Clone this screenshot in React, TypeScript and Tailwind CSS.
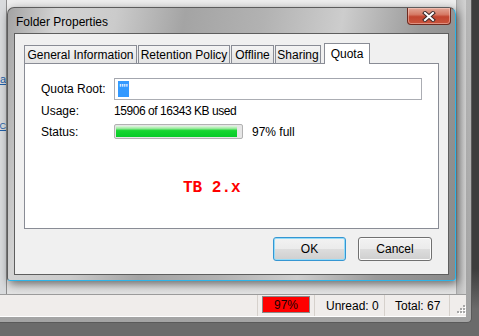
import React from 'react';

const tabs = [
  { label: 'General Information', w: 'w-[113px]' },
  { label: 'Retention Policy', w: 'w-[92px]' },
  { label: 'Offline', w: 'w-[43px]' },
  { label: 'Sharing', w: 'w-[46px]' },
];

function CloseButton() {
  return (
    <div className="-mr-[2px] w-[44px] h-[17px] rounded-b-[4px] border border-t-0 border-[#6e2a1f] bg-[linear-gradient(to_bottom,#e3a797_0%,#d67b66_40%,#c2452f_55%,#c9543d_100%)] shadow-[inset_0_0_0_1px_rgba(255,220,210,0.45)] flex items-center justify-center">
      <svg width="14" height="11" viewBox="0 0 14 11">
        <path d="M3 2 L11 9 M11 2 L3 9" stroke="#3b2a2a" strokeWidth="4" strokeLinecap="square" />
        <path d="M3 2 L11 9 M11 2 L3 9" stroke="#ffffff" strokeWidth="2" strokeLinecap="square" />
      </svg>
    </div>
  );
}

function Grip() {
  const dots = [
    [6, 0],
    [3, 3],
    [6, 3],
    [0, 6],
    [3, 6],
    [6, 6],
  ];
  return (
    <svg width="9" height="9" viewBox="0 0 9 9">
      {dots.map(([x, y], i) => (
        <g key={i}>
          <rect x={x + 1} y={y + 1} width="2" height="2" fill="#ffffff" />
          <rect x={x} y={y} width="2" height="2" fill="#a8a8a8" />
        </g>
      ))}
    </svg>
  );
}

function StatusBar() {
  return (
    <div className="h-[23px] flex border-t border-[#9c9c9c] border-b border-b-white bg-[#f0edeb] text-[12px]">
      <div className="flex-1 border-r border-[#d6d1cc]" />
      <div className="w-[57px] border-r border-[#d6d1cc] pl-[4px] pt-[1px]">
        <div className="w-[48px] h-[17px] border border-[#8a8a8a] bg-[#ff0000] flex items-center justify-center text-[#1a0000]">
          97%
        </div>
      </div>
      <div className="w-[70px] border-r border-[#d6d1cc] pl-[11px] flex items-center">Unread: 0</div>
      <div className="w-[65px] border-r border-[#d6d1cc] pl-[10px] flex items-center">Total: 67</div>
      <div className="flex-1 max-w-[16px] flex items-end justify-start pb-[2px] pl-[7px]">
        <Grip />
      </div>
    </div>
  );
}

function Dialog() {
  return (
    <div className="absolute left-[7px] top-[7px] w-[449px] h-[274px] flex flex-col rounded-t-[7px] rounded-b-[3px] border border-[#5c5c5c] border-r-[#2cb4e8] border-b-[#2cb4e8] bg-[linear-gradient(100deg,#a3a3a3_0%,#d3d3d3_10%,#cbcbcb_22%,#a4a4a4_36%,#b2b2b2_52%,#cdcdcd_68%,#9a9a9a_84%,#8a8a8a_100%)] shadow-[2px_3px_10px_rgba(0,0,0,0.55)] px-[6px] pb-[5px]">
      {/* title bar */}
      <div className="h-[25px] flex items-start pl-[2px]">
        <span className="mt-[5px] text-[12px] text-black">Folder Properties</span>
        <div className="ml-auto">
          <CloseButton />
        </div>
      </div>

      {/* client area */}
      <div className="flex-1 flex flex-col border border-[#5e5e5e] bg-[#f0f0f0] pt-[9px] px-[9px]">
        {/* tabs */}
        <div className="h-[20px] flex items-end gap-[1px]">
          {tabs.map((t) => (
            <div
              key={t.label}
              className={`${t.w} h-[18px] flex items-center justify-center border border-b-0 border-[#898c95] bg-[linear-gradient(to_bottom,#f4f4f4,#e4e4e4)] whitespace-nowrap`}
            >
              {t.label}
            </div>
          ))}
          <div className="relative z-10 ml-[2px] -mb-px w-[46px] h-[21px] flex items-center justify-center border border-b-0 border-[#898c95] bg-white pb-[1px]">
            Quota
          </div>
        </div>

        {/* tab panel */}
        <div className="h-[166px] border border-[#898c95] bg-white pl-[16px] flex flex-col">
          <div className="mt-[14px] h-[22px] flex items-center">
            <span className="w-[73px]">Quota Root:</span>
            <div className="w-[308px] h-[22px] border border-[#abadb3] border-t-[#a3a6ae] bg-white flex items-center pl-[3px]">
              <span className="h-[16px] w-[11px] bg-[#3399ff] text-white leading-[16px] text-[12px] flex justify-center">
                ""
              </span>
            </div>
          </div>
          <div className="mt-[3px] h-[16px] flex items-center">
            <span className="w-[73px]">Usage:</span>
            <span className="tracking-[-0.45px]">15906 of 16343 KB used</span>
          </div>
          <div className="mt-[5px] h-[15px] flex items-center">
            <span className="w-[73px]">Status:</span>
            <div className="w-[129px] h-[15px] rounded-[2px] border border-[#b2b2b2] bg-[#e6e6e6] p-px">
              <div className="h-full w-[97%] bg-[linear-gradient(to_bottom,#dff7df_0%,#9ce99f_22%,#17d631_42%,#06cb28_100%)]" />
            </div>
            <span className="ml-[9px]">97% full</span>
          </div>
          <div className="mt-[40px] ml-[142px] font-['Liberation_Mono',monospace] font-bold text-[16px] leading-[18px] text-[#ff0000] whitespace-pre">
            TB 2.x
          </div>
        </div>

        {/* buttons */}
        <div className="mt-[8px] flex justify-end gap-[12px] pr-[7px]">
          <button className="w-[73px] h-[24px] rounded-[3px] border border-[#3596d2] shadow-[inset_0_0_0_1px_#93dbf8] bg-[linear-gradient(to_bottom,#f2f2f2_0%,#ebebeb_50%,#dddddd_50%,#cfcfcf_100%)] text-[12px]">
            OK
          </button>
          <button className="w-[74px] h-[24px] rounded-[3px] border border-[#707070] shadow-[inset_0_0_0_1px_#fcfcfc] bg-[linear-gradient(to_bottom,#f2f2f2_0%,#ebebeb_50%,#dddddd_50%,#cfcfcf_100%)] text-[12px]">
            Cancel
          </button>
        </div>
      </div>
    </div>
  );
}

export default function App() {
  return (
    <div className="relative w-[479px] h-[336px] overflow-hidden bg-[linear-gradient(to_bottom,#3d3d3d_0%,#3d3d3d_80%,#6b6b6b_92%)] font-['Liberation_Sans',Arial,sans-serif] text-[12px] text-black">
      {/* mail window behind */}
      <div className="absolute left-0 top-0 w-[472px] h-[323px] flex flex-col pr-[5px] pb-[5px] rounded-br-[5px] border-r border-b border-[#5a5a5a] bg-[linear-gradient(to_bottom,#b8b8b8,#a4a4a4)]">
        <div className="flex-1 flex bg-[linear-gradient(to_bottom,#eeeeee,#e2e2e2)]">
          <div className="w-[7px] overflow-hidden flex flex-col items-end border-r border-[#8c8c8c] bg-[#d9dbdd] text-[#1f5fa8]">
            <span className="mt-[73px] text-[11px] leading-[13px] underline">a</span>
            <span className="mt-[34px] text-[9px] leading-[12px] underline">C</span>
          </div>
          <div className="flex-1" />
          <div className="w-[10px] border-l border-[#a8a8a8] bg-[linear-gradient(to_right,#bdbdbd,#d2d2d2)]" />
        </div>
        <StatusBar />
      </div>
      <Dialog />
    </div>
  );
}
